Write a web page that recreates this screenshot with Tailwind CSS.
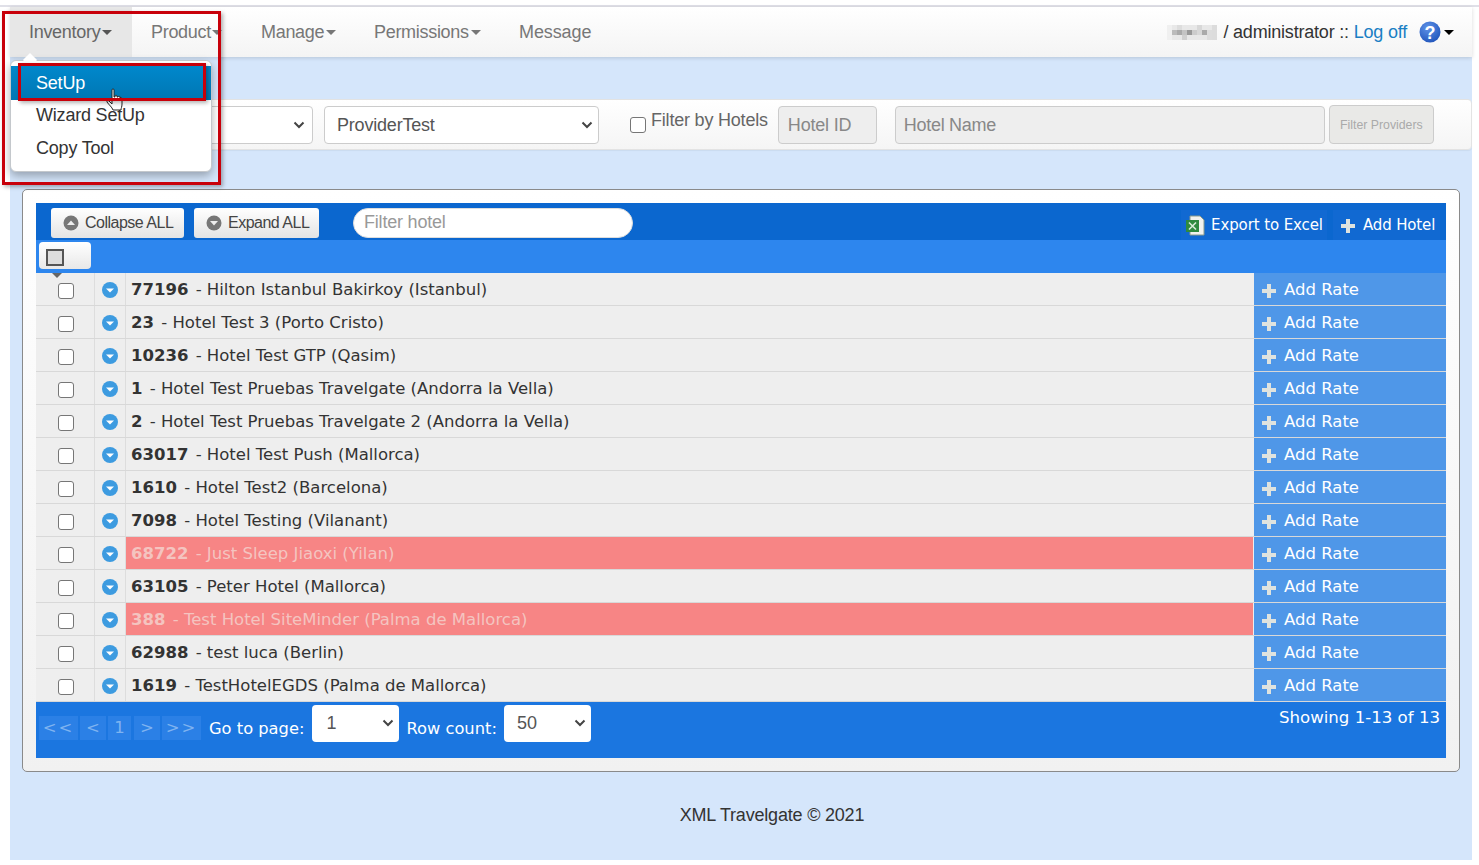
<!doctype html>
<html>
<head>
<meta charset="utf-8">
<script src="https://cdn.jsdelivr.net/npm/@tailwindcss/browser@4"></script>
</head>
<body class="bg-white font-['Liberation_Sans',sans-serif] text-[#333] h-[865px] overflow-hidden">
<div class="relative w-[1479px] h-[865px] overflow-hidden">
  <div class="h-[5px]"></div>
  <div class="h-[2px] bg-[#e0e0e8]"></div>
  <div class="ml-[10px] w-[1462px] h-[853px] bg-[#d5e6fb] flex flex-col">
    <nav class="h-[50px] shrink-0 flex items-stretch bg-gradient-to-b from-white to-[#f4f4f4] shadow-[0_1px_4px_rgba(0,0,0,0.15)] text-[18px] tracking-[-0.3px] text-[#777]">
      <div class="w-[122px] bg-[#e7e7e7] flex items-center pl-[19px] text-[#666]">Inventory<span class="ml-[2px] border-x-[5px] border-x-transparent border-t-[5px] border-t-[#555]"></span></div>
      <div class="w-[110px] flex items-center pl-[19px]">Product<span class="ml-[1px] border-x-[5px] border-x-transparent border-t-[5px] border-t-[#777]"></span></div>
      <div class="w-[113px] flex items-center pl-[19px]">Manage<span class="ml-[2px] border-x-[5px] border-x-transparent border-t-[5px] border-t-[#777]"></span></div>
      <div class="w-[145px] flex items-center pl-[19px]">Permissions<span class="ml-[2px] border-x-[5px] border-x-transparent border-t-[5px] border-t-[#777]"></span></div>
      <div class="flex items-center pl-[19px] tracking-[-0.1px]">Message</div>
      <div class="ml-auto flex items-center pr-[18px] text-[#333] tracking-[-0.2px]">
        <svg class="mr-[6px] mt-[1px]" width="50" height="15" viewBox="0 0 10 3" shape-rendering="crispEdges"><rect width="10" height="3" fill="#e8e8e8"/><rect x="0" width="1" height="3" fill="#f0f0f0"/><rect x="1" y="1" width="1" height="1" fill="#bbb"/><rect x="2" y="1" width="1" height="1" fill="#aaa"/><rect x="2" y="0" width="1" height="1" fill="#ddd"/><rect x="3" y="1" width="1" height="1" fill="#c4c4c4"/><rect x="3" y="2" width="1" height="1" fill="#d0d0d0"/><rect x="4" y="1" width="1" height="1" fill="#999"/><rect x="5" y="1" width="1" height="1" fill="#ccc"/><rect x="6" y="0" width="1" height="2" fill="#d8d8d8"/><rect x="7" y="1" width="1" height="1" fill="#aaa"/><rect x="8" y="1" width="1" height="2" fill="#ddd"/><rect x="9" width="1" height="3" fill="#dcdcdc"/></svg>
        <span>/ administrator ::&nbsp;</span><span class="text-[#1a7fc4]">Log off</span>
        <svg class="ml-[12px]" width="22" height="22" viewBox="0 0 22 22"><defs><radialGradient id="h" cx="0.4" cy="0.3" r="0.8"><stop offset="0" stop-color="#5f93e8"/><stop offset="1" stop-color="#1c50b8"/></radialGradient></defs><circle cx="11" cy="11" r="10.5" fill="url(#h)"/><text x="11" y="17.5" text-anchor="middle" font-family="Liberation Sans" font-weight="700" font-size="18" fill="#fff">?</text></svg>
        <span class="ml-[3px] border-x-[5px] border-x-transparent border-t-[5px] border-t-black"></span>
      </div>
    </nav>
    <div class="mt-[42px] h-[51px] shrink-0 bg-gradient-to-b from-white to-[#f5f5f5] border border-[#e3e3e3] rounded-[4px] shadow-[0_1px_1px_rgba(0,0,0,0.05)] flex items-center text-[18px] text-[#555]">
      <div class="w-[303px] ml-[-1px] h-[38px] shrink-0 bg-white border border-[#ccc] rounded-[4px] flex items-center justify-end pr-[7px]">
        <svg width="12" height="8" viewBox="0 0 12 8"><path d="M1.5 1.5 6 6l4.5-4.5" fill="none" stroke="#444" stroke-width="2"/></svg>
      </div>
      <div class="ml-[11px] w-[275px] h-[38px] shrink-0 bg-white border border-[#ccc] rounded-[4px] flex items-center justify-between pl-[12px] pr-[5px] pt-[1px] tracking-[-0.2px]">ProviderTest
        <svg width="12" height="8" viewBox="0 0 12 8"><path d="M1.5 1.5 6 6l4.5-4.5" fill="none" stroke="#444" stroke-width="2"/></svg>
      </div>
      <span class="ml-[31px] w-[16px] h-[16px] bg-white border border-[#767676] rounded-[3px] mt-[1px]"></span>
      <span class="ml-[5px] text-[#666] tracking-[-0.2px] mb-[8px]">Filter by Hotels</span>
      <div class="ml-[10px] w-[99px] h-[38px] shrink-0 bg-[#eee] border border-[#ccc] rounded-[4px] flex items-center pl-[9px] pt-[1px] tracking-[-0.2px] text-[#888]">Hotel ID</div>
      <div class="ml-[18px] w-[430px] h-[38px] shrink-0 bg-[#eee] border border-[#ccc] rounded-[4px] flex items-center pl-[8px] pt-[1px] tracking-[-0.3px] text-[#888]">Hotel Name</div>
      <div class="ml-[4px] w-[105px] h-[39px] shrink-0 bg-[#e9e9e7] border border-[#ccc] rounded-[4px] flex items-center justify-center pt-[2px] text-[12.3px] text-[#aaa]">Filter Providers</div>
    </div>
    <main class="mt-[39px] ml-[12px] w-[1438px] h-[583px] shrink-0 bg-gradient-to-b from-white to-[#f1f1f1] border border-[#8a8a8a] rounded-[5px] p-[13px]">
      <div class="h-[37px] bg-[#0b67cf] flex items-center pt-[2px] pl-[15px] pr-[6px]">
        <div class="w-[133px] h-[30px] bg-gradient-to-b from-white to-[#e4e4e4] rounded-[3px] flex items-center pl-[12px] pt-[1px] gap-[6px] text-[16px] tracking-[-0.5px] text-[#444]"><svg width="16" height="16" viewBox="0 0 16 16"><circle cx="8" cy="8" r="7.5" fill="#777"/><path d="M4 10h8L8 5.500z" fill="#eee"/></svg>Collapse ALL</div>
        <div class="ml-[10px] w-[125px] h-[30px] bg-gradient-to-b from-white to-[#e4e4e4] rounded-[3px] flex items-center pl-[12px] pt-[1px] gap-[6px] text-[16px] tracking-[-0.5px] text-[#444]"><svg width="16" height="16" viewBox="0 0 16 16"><circle cx="8" cy="8" r="7.5" fill="#777"/><path d="M4 6h8l-4 4.500z" fill="#eee"/></svg>Expand ALL</div>
        <div class="ml-[34px] w-[280px] h-[30px] bg-white rounded-full border border-[#ddd] flex items-center pl-[10px] text-[18px] tracking-[-0.2px] text-[#999]">Filter hotel</div>
        <div class="ml-auto self-end h-[30px] w-[146px] bg-[#1169d2] flex items-center pl-[4px] pt-[1px] font-['DejaVu_Sans',sans-serif] text-[15px] tracking-[-0.1px] text-white whitespace-nowrap">
          <svg width="21" height="21" viewBox="0 0 21 21"><path d="M5 1h10l4 4v15H5z" fill="#f2f2ee" stroke="#8a9a8a"/><rect x="1" y="5" width="13" height="12" fill="#2f8a3e"/><path d="M4 7.500l7 7M11 7.500l-7 7" stroke="#d8ecd8" stroke-width="1.6"/></svg>
          <span class="ml-[5px]">Export to Excel</span></div>
        <div class="ml-[6px] self-end h-[30px] w-[107px] bg-[#1169d2] flex items-center pl-[7px] pt-[1px] font-['DejaVu_Sans',sans-serif] text-[15px] tracking-[-0.15px] text-white whitespace-nowrap">
          <svg width="16" height="16" viewBox="0 0 16 16"><path d="M6 1h4v5h5v4h-5v5H6v-5H1V6h5z" fill="#dfe3df"/></svg>
          <span class="ml-[7px]">Add Hotel</span></div>
      </div>
      <div class="h-[33px] bg-[#2d86ee] relative">
        <div class="absolute left-[3px] top-[2px] w-[52px] h-[27px] bg-gradient-to-b from-white to-[#e8e8e8] rounded-[4px] flex items-center pl-[7px] pt-[3px]"><span class="w-[18px] h-[17px] bg-[#ddd] border-2 border-[#555]"></span></div>
      </div>
      <div class="font-['DejaVu_Sans',sans-serif] text-[16.5px] text-[#333]">
        <div class="relative h-[33px] flex bg-[#eee] border-b border-[#d8d8d8]">
          <span class="absolute left-[16px] top-0 border-x-[5px] border-x-transparent border-t-[5px] border-t-[#666]"></span>
          <div class="w-[59px] pl-[2px] border-r border-[#ddd] flex items-center justify-center"><span class="w-[16px] h-[16px] mt-[4px] bg-white border border-[#767676] rounded-[3px]"></span></div>
          <div class="w-[31px] pt-[2px] border-r border-[#ddd] flex items-center justify-center"><svg width="16" height="16" viewBox="0 0 16 16"><circle cx="8" cy="8" r="8" fill="#3d9be0"/><path d="M4 6.500h8L8 10.500z" fill="#fff"/></svg></div>
          <div class="flex-1 flex items-center pl-[5px] pt-[3px]"><b class="mr-[2px]">77196</b>&nbsp;- Hilton Istanbul Bakirkoy (Istanbul)</div>
          <div class="w-[193px] bg-[#4f97e8] border-l border-[#eee] flex items-center pl-[7px] pt-[3px] text-[#fff]"><svg width="16" height="16" viewBox="0 0 16 16"><path d="M6 1h4v5h5v4h-5v5H6v-5H1V6h5z" fill="#dfe3df"/></svg><span class="ml-[7px]">Add Rate</span></div>
        </div>
        <div class="h-[33px] flex bg-[#eee] border-b border-[#d8d8d8]">
          <div class="w-[59px] pl-[2px] border-r border-[#ddd] flex items-center justify-center"><span class="w-[16px] h-[16px] mt-[4px] bg-white border border-[#767676] rounded-[3px]"></span></div>
          <div class="w-[31px] pt-[2px] border-r border-[#ddd] flex items-center justify-center"><svg width="16" height="16" viewBox="0 0 16 16"><circle cx="8" cy="8" r="8" fill="#3d9be0"/><path d="M4 6.500h8L8 10.500z" fill="#fff"/></svg></div>
          <div class="flex-1 flex items-center pl-[5px] pt-[3px]"><b class="mr-[2px]">23</b>&nbsp;- Hotel Test 3 (Porto Cristo)</div>
          <div class="w-[193px] bg-[#4f97e8] border-l border-[#eee] flex items-center pl-[7px] pt-[3px] text-[#fff]"><svg width="16" height="16" viewBox="0 0 16 16"><path d="M6 1h4v5h5v4h-5v5H6v-5H1V6h5z" fill="#dfe3df"/></svg><span class="ml-[7px]">Add Rate</span></div>
        </div>
        <div class="h-[33px] flex bg-[#eee] border-b border-[#d8d8d8]">
          <div class="w-[59px] pl-[2px] border-r border-[#ddd] flex items-center justify-center"><span class="w-[16px] h-[16px] mt-[4px] bg-white border border-[#767676] rounded-[3px]"></span></div>
          <div class="w-[31px] pt-[2px] border-r border-[#ddd] flex items-center justify-center"><svg width="16" height="16" viewBox="0 0 16 16"><circle cx="8" cy="8" r="8" fill="#3d9be0"/><path d="M4 6.500h8L8 10.500z" fill="#fff"/></svg></div>
          <div class="flex-1 flex items-center pl-[5px] pt-[3px]"><b class="mr-[2px]">10236</b>&nbsp;- Hotel Test GTP (Qasim)</div>
          <div class="w-[193px] bg-[#4f97e8] border-l border-[#eee] flex items-center pl-[7px] pt-[3px] text-[#fff]"><svg width="16" height="16" viewBox="0 0 16 16"><path d="M6 1h4v5h5v4h-5v5H6v-5H1V6h5z" fill="#dfe3df"/></svg><span class="ml-[7px]">Add Rate</span></div>
        </div>
        <div class="h-[33px] flex bg-[#eee] border-b border-[#d8d8d8]">
          <div class="w-[59px] pl-[2px] border-r border-[#ddd] flex items-center justify-center"><span class="w-[16px] h-[16px] mt-[4px] bg-white border border-[#767676] rounded-[3px]"></span></div>
          <div class="w-[31px] pt-[2px] border-r border-[#ddd] flex items-center justify-center"><svg width="16" height="16" viewBox="0 0 16 16"><circle cx="8" cy="8" r="8" fill="#3d9be0"/><path d="M4 6.500h8L8 10.500z" fill="#fff"/></svg></div>
          <div class="flex-1 flex items-center pl-[5px] pt-[3px]"><b class="mr-[2px]">1</b>&nbsp;- Hotel Test Pruebas Travelgate (Andorra la Vella)</div>
          <div class="w-[193px] bg-[#4f97e8] border-l border-[#eee] flex items-center pl-[7px] pt-[3px] text-[#fff]"><svg width="16" height="16" viewBox="0 0 16 16"><path d="M6 1h4v5h5v4h-5v5H6v-5H1V6h5z" fill="#dfe3df"/></svg><span class="ml-[7px]">Add Rate</span></div>
        </div>
        <div class="h-[33px] flex bg-[#eee] border-b border-[#d8d8d8]">
          <div class="w-[59px] pl-[2px] border-r border-[#ddd] flex items-center justify-center"><span class="w-[16px] h-[16px] mt-[4px] bg-white border border-[#767676] rounded-[3px]"></span></div>
          <div class="w-[31px] pt-[2px] border-r border-[#ddd] flex items-center justify-center"><svg width="16" height="16" viewBox="0 0 16 16"><circle cx="8" cy="8" r="8" fill="#3d9be0"/><path d="M4 6.500h8L8 10.500z" fill="#fff"/></svg></div>
          <div class="flex-1 flex items-center pl-[5px] pt-[3px]"><b class="mr-[2px]">2</b>&nbsp;- Hotel Test Pruebas Travelgate 2 (Andorra la Vella)</div>
          <div class="w-[193px] bg-[#4f97e8] border-l border-[#eee] flex items-center pl-[7px] pt-[3px] text-[#fff]"><svg width="16" height="16" viewBox="0 0 16 16"><path d="M6 1h4v5h5v4h-5v5H6v-5H1V6h5z" fill="#dfe3df"/></svg><span class="ml-[7px]">Add Rate</span></div>
        </div>
        <div class="h-[33px] flex bg-[#eee] border-b border-[#d8d8d8]">
          <div class="w-[59px] pl-[2px] border-r border-[#ddd] flex items-center justify-center"><span class="w-[16px] h-[16px] mt-[4px] bg-white border border-[#767676] rounded-[3px]"></span></div>
          <div class="w-[31px] pt-[2px] border-r border-[#ddd] flex items-center justify-center"><svg width="16" height="16" viewBox="0 0 16 16"><circle cx="8" cy="8" r="8" fill="#3d9be0"/><path d="M4 6.500h8L8 10.500z" fill="#fff"/></svg></div>
          <div class="flex-1 flex items-center pl-[5px] pt-[3px]"><b class="mr-[2px]">63017</b>&nbsp;- Hotel Test Push (Mallorca)</div>
          <div class="w-[193px] bg-[#4f97e8] border-l border-[#eee] flex items-center pl-[7px] pt-[3px] text-[#fff]"><svg width="16" height="16" viewBox="0 0 16 16"><path d="M6 1h4v5h5v4h-5v5H6v-5H1V6h5z" fill="#dfe3df"/></svg><span class="ml-[7px]">Add Rate</span></div>
        </div>
        <div class="h-[33px] flex bg-[#eee] border-b border-[#d8d8d8]">
          <div class="w-[59px] pl-[2px] border-r border-[#ddd] flex items-center justify-center"><span class="w-[16px] h-[16px] mt-[4px] bg-white border border-[#767676] rounded-[3px]"></span></div>
          <div class="w-[31px] pt-[2px] border-r border-[#ddd] flex items-center justify-center"><svg width="16" height="16" viewBox="0 0 16 16"><circle cx="8" cy="8" r="8" fill="#3d9be0"/><path d="M4 6.500h8L8 10.500z" fill="#fff"/></svg></div>
          <div class="flex-1 flex items-center pl-[5px] pt-[3px]"><b class="mr-[2px]">1610</b>&nbsp;- Hotel Test2 (Barcelona)</div>
          <div class="w-[193px] bg-[#4f97e8] border-l border-[#eee] flex items-center pl-[7px] pt-[3px] text-[#fff]"><svg width="16" height="16" viewBox="0 0 16 16"><path d="M6 1h4v5h5v4h-5v5H6v-5H1V6h5z" fill="#dfe3df"/></svg><span class="ml-[7px]">Add Rate</span></div>
        </div>
        <div class="h-[33px] flex bg-[#eee] border-b border-[#d8d8d8]">
          <div class="w-[59px] pl-[2px] border-r border-[#ddd] flex items-center justify-center"><span class="w-[16px] h-[16px] mt-[4px] bg-white border border-[#767676] rounded-[3px]"></span></div>
          <div class="w-[31px] pt-[2px] border-r border-[#ddd] flex items-center justify-center"><svg width="16" height="16" viewBox="0 0 16 16"><circle cx="8" cy="8" r="8" fill="#3d9be0"/><path d="M4 6.500h8L8 10.500z" fill="#fff"/></svg></div>
          <div class="flex-1 flex items-center pl-[5px] pt-[3px]"><b class="mr-[2px]">7098</b>&nbsp;- Hotel Testing (Vilanant)</div>
          <div class="w-[193px] bg-[#4f97e8] border-l border-[#eee] flex items-center pl-[7px] pt-[3px] text-[#fff]"><svg width="16" height="16" viewBox="0 0 16 16"><path d="M6 1h4v5h5v4h-5v5H6v-5H1V6h5z" fill="#dfe3df"/></svg><span class="ml-[7px]">Add Rate</span></div>
        </div>
        <div class="h-[33px] flex bg-[#eee] border-b border-[#d8d8d8]">
          <div class="w-[59px] pl-[2px] border-r border-[#ddd] flex items-center justify-center"><span class="w-[16px] h-[16px] mt-[4px] bg-white border border-[#767676] rounded-[3px]"></span></div>
          <div class="w-[31px] pt-[2px] border-r border-[#ddd] flex items-center justify-center"><svg width="16" height="16" viewBox="0 0 16 16"><circle cx="8" cy="8" r="8" fill="#3d9be0"/><path d="M4 6.500h8L8 10.500z" fill="#fff"/></svg></div>
          <div class="flex-1 flex items-center pl-[5px] pt-[3px] bg-[#f78585] text-[#f4c4c0]"><b class="mr-[2px]">68722</b>&nbsp;- Just Sleep Jiaoxi (Yilan)</div>
          <div class="w-[193px] bg-[#4f97e8] border-l border-[#eee] flex items-center pl-[7px] pt-[3px] text-[#fff]"><svg width="16" height="16" viewBox="0 0 16 16"><path d="M6 1h4v5h5v4h-5v5H6v-5H1V6h5z" fill="#dfe3df"/></svg><span class="ml-[7px]">Add Rate</span></div>
        </div>
        <div class="h-[33px] flex bg-[#eee] border-b border-[#d8d8d8]">
          <div class="w-[59px] pl-[2px] border-r border-[#ddd] flex items-center justify-center"><span class="w-[16px] h-[16px] mt-[4px] bg-white border border-[#767676] rounded-[3px]"></span></div>
          <div class="w-[31px] pt-[2px] border-r border-[#ddd] flex items-center justify-center"><svg width="16" height="16" viewBox="0 0 16 16"><circle cx="8" cy="8" r="8" fill="#3d9be0"/><path d="M4 6.500h8L8 10.500z" fill="#fff"/></svg></div>
          <div class="flex-1 flex items-center pl-[5px] pt-[3px]"><b class="mr-[2px]">63105</b>&nbsp;- Peter Hotel (Mallorca)</div>
          <div class="w-[193px] bg-[#4f97e8] border-l border-[#eee] flex items-center pl-[7px] pt-[3px] text-[#fff]"><svg width="16" height="16" viewBox="0 0 16 16"><path d="M6 1h4v5h5v4h-5v5H6v-5H1V6h5z" fill="#dfe3df"/></svg><span class="ml-[7px]">Add Rate</span></div>
        </div>
        <div class="h-[33px] flex bg-[#eee] border-b border-[#d8d8d8]">
          <div class="w-[59px] pl-[2px] border-r border-[#ddd] flex items-center justify-center"><span class="w-[16px] h-[16px] mt-[4px] bg-white border border-[#767676] rounded-[3px]"></span></div>
          <div class="w-[31px] pt-[2px] border-r border-[#ddd] flex items-center justify-center"><svg width="16" height="16" viewBox="0 0 16 16"><circle cx="8" cy="8" r="8" fill="#3d9be0"/><path d="M4 6.500h8L8 10.500z" fill="#fff"/></svg></div>
          <div class="flex-1 flex items-center pl-[5px] pt-[3px] bg-[#f78585] text-[#f4c4c0]"><b class="mr-[2px]">388</b>&nbsp;- Test Hotel SiteMinder (Palma de Mallorca)</div>
          <div class="w-[193px] bg-[#4f97e8] border-l border-[#eee] flex items-center pl-[7px] pt-[3px] text-[#fff]"><svg width="16" height="16" viewBox="0 0 16 16"><path d="M6 1h4v5h5v4h-5v5H6v-5H1V6h5z" fill="#dfe3df"/></svg><span class="ml-[7px]">Add Rate</span></div>
        </div>
        <div class="h-[33px] flex bg-[#eee] border-b border-[#d8d8d8]">
          <div class="w-[59px] pl-[2px] border-r border-[#ddd] flex items-center justify-center"><span class="w-[16px] h-[16px] mt-[4px] bg-white border border-[#767676] rounded-[3px]"></span></div>
          <div class="w-[31px] pt-[2px] border-r border-[#ddd] flex items-center justify-center"><svg width="16" height="16" viewBox="0 0 16 16"><circle cx="8" cy="8" r="8" fill="#3d9be0"/><path d="M4 6.500h8L8 10.500z" fill="#fff"/></svg></div>
          <div class="flex-1 flex items-center pl-[5px] pt-[3px]"><b class="mr-[2px]">62988</b>&nbsp;- test luca (Berlin)</div>
          <div class="w-[193px] bg-[#4f97e8] border-l border-[#eee] flex items-center pl-[7px] pt-[3px] text-[#fff]"><svg width="16" height="16" viewBox="0 0 16 16"><path d="M6 1h4v5h5v4h-5v5H6v-5H1V6h5z" fill="#dfe3df"/></svg><span class="ml-[7px]">Add Rate</span></div>
        </div>
        <div class="h-[33px] flex bg-[#eee] border-b border-[#d8d8d8]">
          <div class="w-[59px] pl-[2px] border-r border-[#ddd] flex items-center justify-center"><span class="w-[16px] h-[16px] mt-[4px] bg-white border border-[#767676] rounded-[3px]"></span></div>
          <div class="w-[31px] pt-[2px] border-r border-[#ddd] flex items-center justify-center"><svg width="16" height="16" viewBox="0 0 16 16"><circle cx="8" cy="8" r="8" fill="#3d9be0"/><path d="M4 6.500h8L8 10.500z" fill="#fff"/></svg></div>
          <div class="flex-1 flex items-center pl-[5px] pt-[3px]"><b class="mr-[2px]">1619</b>&nbsp;- TestHotelEGDS (Palma de Mallorca)</div>
          <div class="w-[193px] bg-[#4f97e8] border-l border-[#eee] flex items-center pl-[7px] pt-[3px] text-[#fff]"><svg width="16" height="16" viewBox="0 0 16 16"><path d="M6 1h4v5h5v4h-5v5H6v-5H1V6h5z" fill="#dfe3df"/></svg><span class="ml-[7px]">Add Rate</span></div>
        </div>
      </div>
      <div class="h-[56px] bg-[#1b76e0] flex items-start pl-[3px] pr-[6px] font-['DejaVu_Sans',sans-serif] text-[16.3px] text-white">
        <div class="mt-[14px] flex text-[#7fb3f0] text-[16.5px]">
          <span class="w-[39px] h-[24px] bg-[#2b80e6] flex items-center justify-center tracking-[2px]">&lt;&lt;</span>
          <span class="ml-[2px] w-[26px] h-[24px] bg-[#2b80e6] flex items-center justify-center">&lt;</span>
          <span class="ml-[2px] w-[23px] h-[24px] bg-[#2b80e6] flex items-center justify-center">1</span>
          <span class="ml-[3px] w-[26px] h-[24px] bg-[#2b80e6] flex items-center justify-center">&gt;</span>
          <span class="ml-[2px] w-[39px] h-[24px] bg-[#2b80e6] flex items-center justify-center tracking-[2px]">&gt;&gt;</span>
        </div>
        <span class="ml-[8px] mt-[15px]">Go to page:</span>
        <div class="ml-[8px] mt-[3px] w-[87px] h-[37px] bg-white rounded-[4px] flex items-center justify-between pl-[14px] pr-[5px] pb-[1px] font-['Liberation_Sans',sans-serif] text-[18px] text-[#555]">1<svg width="12" height="8" viewBox="0 0 12 8"><path d="M1.5 1.5 6 6l4.5-4.500" fill="none" stroke="#444" stroke-width="2"/></svg></div>
        <span class="ml-[7px] mt-[15px]">Row count:</span>
        <div class="ml-[7px] mt-[3px] w-[87px] h-[37px] bg-white rounded-[4px] flex items-center justify-between pl-[13px] pr-[5px] pb-[1px] font-['Liberation_Sans',sans-serif] text-[18px] text-[#555]">50<svg width="12" height="8" viewBox="0 0 12 8"><path d="M1.5 1.5 6 6l4.5-4.500" fill="none" stroke="#444" stroke-width="2"/></svg></div>
        <span class="ml-auto mt-[4px] text-[16.6px]">Showing 1-13 of 13</span>
      </div>
    </main>
    <footer class="mt-[30px] pl-[62px] text-center text-[18px] tracking-[-0.2px] text-[#333]">XML Travelgate © 2021</footer>
  </div>
  <!-- dropdown menu, over the page -->
  <div class="absolute left-[10px] top-[60px] w-[202px] h-[112px] bg-white border border-[#c4c8cc] rounded-[6px] shadow-[0_4px_10px_rgba(0,0,0,0.3)] text-[18px] tracking-[-0.2px] text-[#333] pt-[5px]">
    <span class="absolute left-[14px] top-[-6px] w-[10px] h-[10px] rotate-45 bg-white"></span>
    <div class="relative h-[34px] bg-gradient-to-b from-[#0088cc] to-[#0077b3] text-white flex items-center pl-[25px]">SetUp</div>
    <div class="h-[31px] flex items-center pl-[25px]">Wizard SetUp</div>
    <div class="h-[34px] flex items-center pl-[25px]">Copy Tool</div>
  </div>
  <svg class="absolute left-[105px] top-[87px]" width="20" height="26" viewBox="0 0 20 26"><path d="M7 3c0-1.500 2-1.500 2 0v7h1v-1c0-1 2-1 2 0v1h1c0-1 2-1 2 0v1c0-1 2-.500 2 .500V17c0 3-1 4-1 6H8c-1-3-4-5-6-8-.500-1 1-2 2-1l3 3z" fill="#fff" stroke="#222" stroke-width="1"/></svg>
  <!-- red annotations -->
  <div class="absolute left-[2px] top-[11px] w-[219px] h-[174px] border-[3px] border-[#c8000a] shadow-[2px_2px_4px_rgba(0,0,0,0.3)]"></div>
  <div class="absolute left-[18px] top-[63px] w-[188px] h-[38px] border-[3px] border-[#c8000a] shadow-[2px_2px_4px_rgba(0,0,0,0.3)]"></div>
</div>
</body>
</html>
